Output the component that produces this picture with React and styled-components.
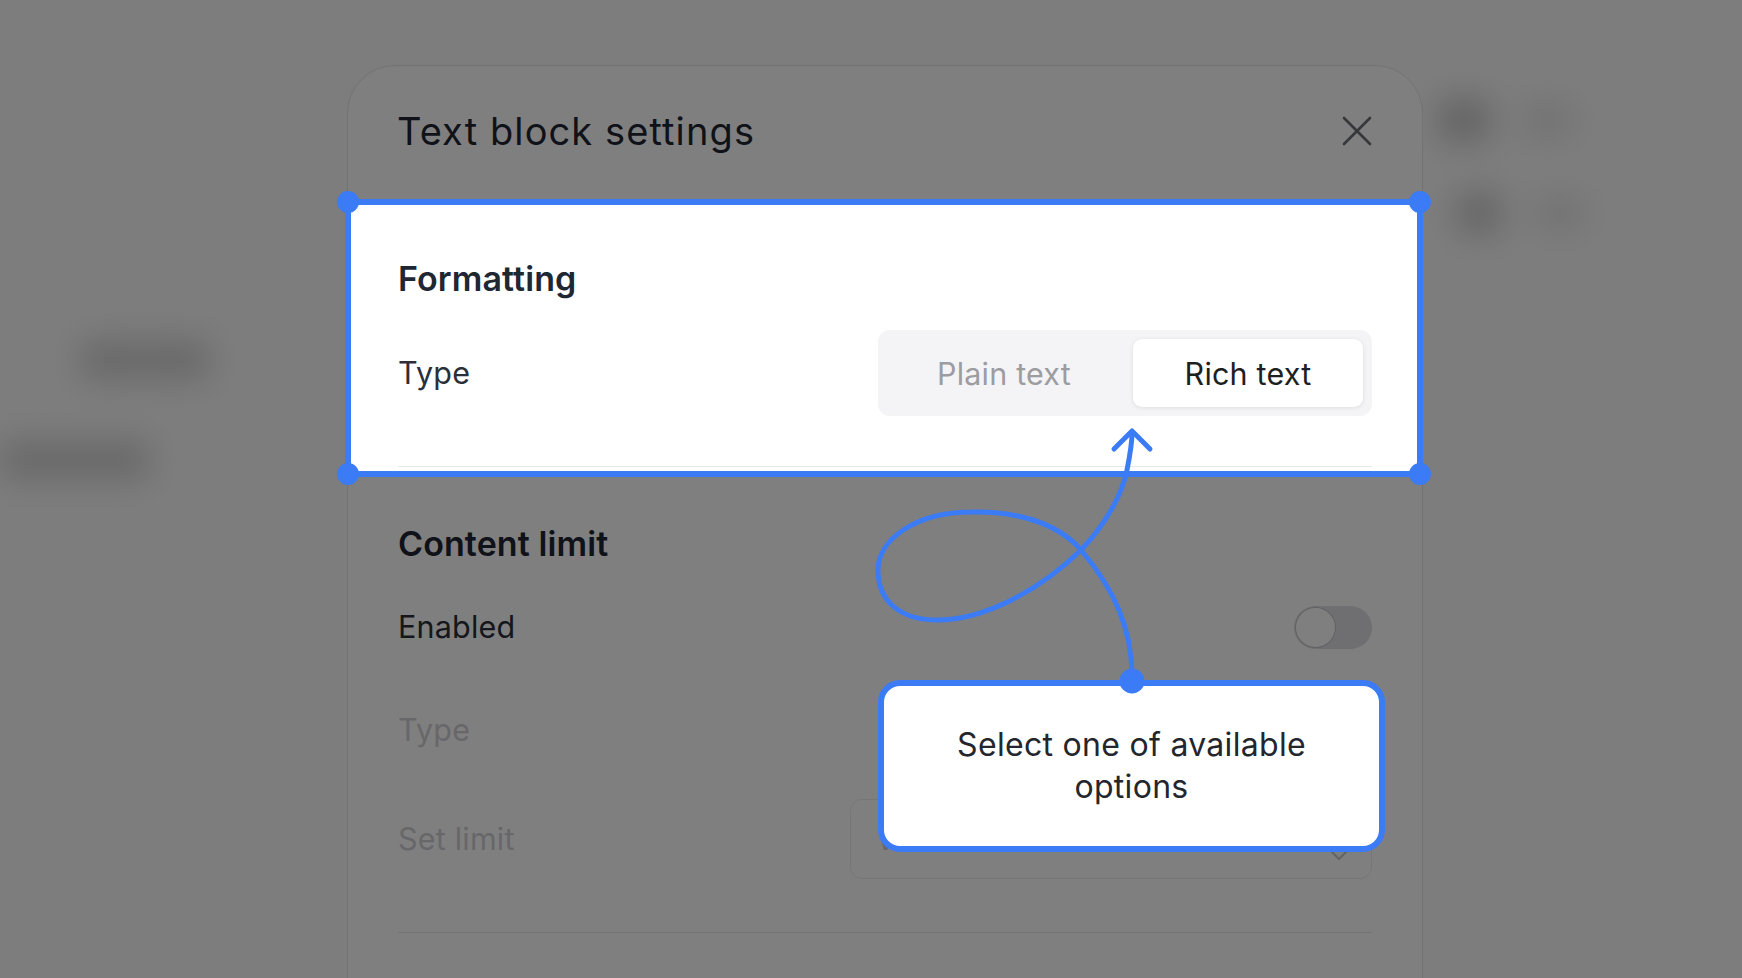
import React from "react";
import styled, { createGlobalStyle } from "styled-components";

const BLUE = "#3b7cf6";

const GlobalStyle = createGlobalStyle`
  html, body {
    margin: 0;
    padding: 0;
  }
  body {
    width: 1742px;
    height: 978px;
    overflow: hidden;
    background: #fbfbfb;
    font-family: Inter, "Noto Sans", "Liberation Sans", sans-serif;
    -webkit-font-smoothing: antialiased;
  }
`;

const Screen = styled.div`
  position: relative;
  width: 1742px;
  height: 978px;
  overflow: hidden;
  background: #fbfbfb;
`;

/* blurred page behind the dialog */
const Backdrop = styled.div`
  display: flex;
  justify-content: space-between;
  height: 100%;
  filter: blur(16px);
`;

const SideNav = styled.div`
  display: flex;
  flex-direction: column;
  gap: 60px;
  width: 260px;
  padding-top: 340px;
`;

const NavBar = styled.div`
  width: ${(p) => p.$w}px;
  height: ${(p) => p.$h}px;
  margin-left: ${(p) => p.$x}px;
  background: #d3d3d3;
  border-radius: 10px;
`;

const RightRail = styled.div`
  display: flex;
  flex-direction: column;
  gap: 50px;
  width: 312px;
  padding-top: 98px;
`;

const RailRow = styled.div`
  display: flex;
  align-items: center;
  gap: 34px;
  padding-left: ${(p) => p.$x}px;
`;

const RailIcon = styled.div`
  width: ${(p) => p.$w}px;
  height: ${(p) => p.$h}px;
  border-radius: 12px;
  background: ${(p) => p.$tone};
`;

const Dim = styled.div`
  position: absolute;
  inset: 0;
  background: rgba(0, 0, 0, 0.5);
  z-index: 10;
`;

const Modal = styled.div`
  position: absolute;
  left: 347px;
  top: 65px;
  width: 1076px;
  height: 1000px;
  box-sizing: border-box;
  background: #ffffff;
  border: 1px solid #e4e4e7;
  border-radius: 48px;
`;

const Header = styled.div`
  display: flex;
  align-items: center;
  justify-content: space-between;
  padding: 43px 50px 49px 49px;
`;

const Title = styled.h2`
  margin: 0;
  font-size: 38px;
  line-height: 44px;
  font-weight: 400;
  letter-spacing: 1.1px;
  color: #1f2733;
`;

const CloseButton = styled.button`
  display: flex;
  padding: 0;
  border: 0;
  background: none;
  color: #6c6e74;
`;

const Spotlight = styled.div`
  position: relative;
  z-index: 20;
  background: #ffffff;
  padding-bottom: 7px;
`;

const Frame = styled.div`
  position: absolute;
  top: -3px;
  bottom: -3px;
  left: -3px;
  right: -1px;
  border: 6px solid ${BLUE};
  pointer-events: none;
`;

const Handle = styled.span`
  position: absolute;
  width: 22px;
  height: 22px;
  border-radius: 50%;
  background: ${BLUE};
  ${(p) => p.$v}: -14px;
  ${(p) => p.$h}: -14px;
`;

const Section = styled.div`
  display: flex;
  flex-direction: column;
  gap: ${(p) => p.$gap}px;
  margin: 0 50px 0 50px;
  padding: ${(p) => p.$pt}px 0 ${(p) => p.$pb}px;
  border-bottom: 1px solid #e8e8eb;
`;

const SectionTitle = styled.h3`
  margin: 0;
  font-size: 34px;
  line-height: 40px;
  font-weight: 600;
  letter-spacing: 0.1px;
  color: #1f2733;
`;

const Row = styled.div`
  display: flex;
  align-items: center;
  justify-content: space-between;
  min-height: 80px;
  margin-top: ${(p) => p.$mt || 0}px;
`;

const Label = styled.span`
  font-size: 30.5px;
  line-height: 40px;
  letter-spacing: 0.2px;
  color: ${(p) => (p.$muted ? "#cfcfd4" : "#2a2f38")};
`;

const Segmented = styled.div`
  display: flex;
  gap: 12px;
  box-sizing: border-box;
  height: 86px;
  padding: 9px;
  border-radius: 12px;
  background: #f4f4f6;
`;

const Segment = styled.div`
  display: flex;
  align-items: center;
  justify-content: center;
  width: ${(p) => p.$w}px;
  border-radius: 9px;
  font-size: 30.5px;
  letter-spacing: 0.2px;
  color: ${(p) => (p.$active ? "#1e1f22" : "#9c9ca1")};
  background: ${(p) => (p.$active ? "#ffffff" : "transparent")};
  box-shadow: ${(p) =>
    p.$active ? "0 1px 5px rgba(0, 0, 0, 0.09)" : "none"};
`;

const Toggle = styled.div`
  display: flex;
  align-items: center;
  box-sizing: border-box;
  width: 78px;
  height: 43px;
  padding: 2px;
  border-radius: 22px;
  background: #dedee4;
`;

const Knob = styled.span`
  width: 39px;
  height: 39px;
  border-radius: 50%;
  background: #ffffff;
  box-shadow: 0 0 0 1px rgba(0, 0, 0, 0.12);
`;

const Select = styled.div`
  display: flex;
  align-items: center;
  justify-content: space-between;
  box-sizing: border-box;
  width: 522px;
  height: 80px;
  padding: 0 22px 2px 26px;
  border: 1.5px solid #ececef;
  border-radius: 12px;
  font-size: 30.5px;
  color: #cfcfd4;
`;

const Chevron = styled.svg`
  margin-top: 34px;
`;

const Tooltip = styled.div`
  position: absolute;
  left: 878px;
  top: 680px;
  z-index: 30;
  display: flex;
  align-items: center;
  justify-content: center;
  box-sizing: border-box;
  width: 507px;
  height: 172px;
  padding: 0 36px;
  border: 6px solid ${BLUE};
  border-radius: 22px;
  background: #ffffff;
  text-align: center;
  font-size: 32px;
  line-height: 42px;
  letter-spacing: 0.3px;
  color: #23262c;
`;

const Pointer = styled.svg`
  position: absolute;
  left: 0;
  top: 0;
  z-index: 31;
  pointer-events: none;
`;

const App = () => {
  return (
    <Screen>
      <GlobalStyle />

      <Backdrop>
        <SideNav>
          <NavBar $x={80} $w={130} $h={40} />
          <NavBar $x={0} $w={150} $h={40} />
        </SideNav>
        <RightRail>
          <RailRow $x={8}>
            <RailIcon $w={52} $h={44} $tone="#c8c8c8" />
            <RailIcon $w={48} $h={30} $tone="#e0e0e0" />
          </RailRow>
          <RailRow $x={26}>
            <RailIcon $w={46} $h={42} $tone="#cbcbcb" />
            <RailIcon $w={48} $h={28} $tone="#e0e0e0" />
          </RailRow>
        </RightRail>
      </Backdrop>

      <Dim />

      <Modal>
        <Header>
          <Title>Text block settings</Title>
          <CloseButton aria-label="Close">
            <svg width="30" height="30" viewBox="0 0 30 30" fill="none">
              <path
                d="M2 2 L28 28 M28 2 L2 28"
                stroke="currentColor"
                strokeWidth="2.6"
                strokeLinecap="round"
              />
            </svg>
          </CloseButton>
        </Header>

        <Spotlight>
          <Frame>
            <Handle $v="top" $h="left" />
            <Handle $v="top" $h="right" />
            <Handle $v="bottom" $h="left" />
            <Handle $v="bottom" $h="right" />
          </Frame>
          <Section $pt={57} $pb={50} $gap={31}>
            <SectionTitle>Formatting</SectionTitle>
            <Row>
              <Label>Type</Label>
              <Segmented>
                <Segment $w={234}>Plain text</Segment>
                <Segment $w={230} $active>
                  Rich text
                </Segment>
              </Segmented>
            </Row>
          </Section>
        </Spotlight>

        <Section $pt={50} $pb={53} $gap={23}>
          <SectionTitle>Content limit</SectionTitle>
          <Row>
            <Label>Enabled</Label>
            <Toggle>
              <Knob />
            </Toggle>
          </Row>
          <Row>
            <Label $muted>Type</Label>
          </Row>
          <Row $mt={6}>
            <Label $muted>Set limit</Label>
            <Select>
              <span>Words</span>
              <Chevron width="20" height="12" viewBox="0 0 20 12" fill="none">
                <path
                  d="M2 2 L10 10 L18 2"
                  stroke="#c9c9ce"
                  strokeWidth="2.2"
                  strokeLinecap="round"
                  strokeLinejoin="round"
                />
              </Chevron>
            </Select>
          </Row>
        </Section>
      </Modal>

      <Tooltip>Select one of available options</Tooltip>

      <Pointer width="1742" height="978" viewBox="0 0 1742 978" fill="none">
        <path
          d="M1132 676 C1132 630 1115 590 1081 550 C1056 521 1012 511 972 512 C915 512 878 540 878 570 C878 605 905 620 937 620 C985 620 1040 590 1081 550 C1105 525 1122 495 1127 470 C1131 450 1132 440 1132 433"
          stroke={BLUE}
          strokeWidth="5"
          strokeLinecap="round"
        />
        <path
          d="M1114 449 L1132 431 L1150 449"
          stroke={BLUE}
          strokeWidth="5"
          strokeLinecap="round"
          strokeLinejoin="round"
        />
        <circle cx="1132" cy="681" r="12.5" fill={BLUE} />
      </Pointer>
    </Screen>
  );
};

export default App;
